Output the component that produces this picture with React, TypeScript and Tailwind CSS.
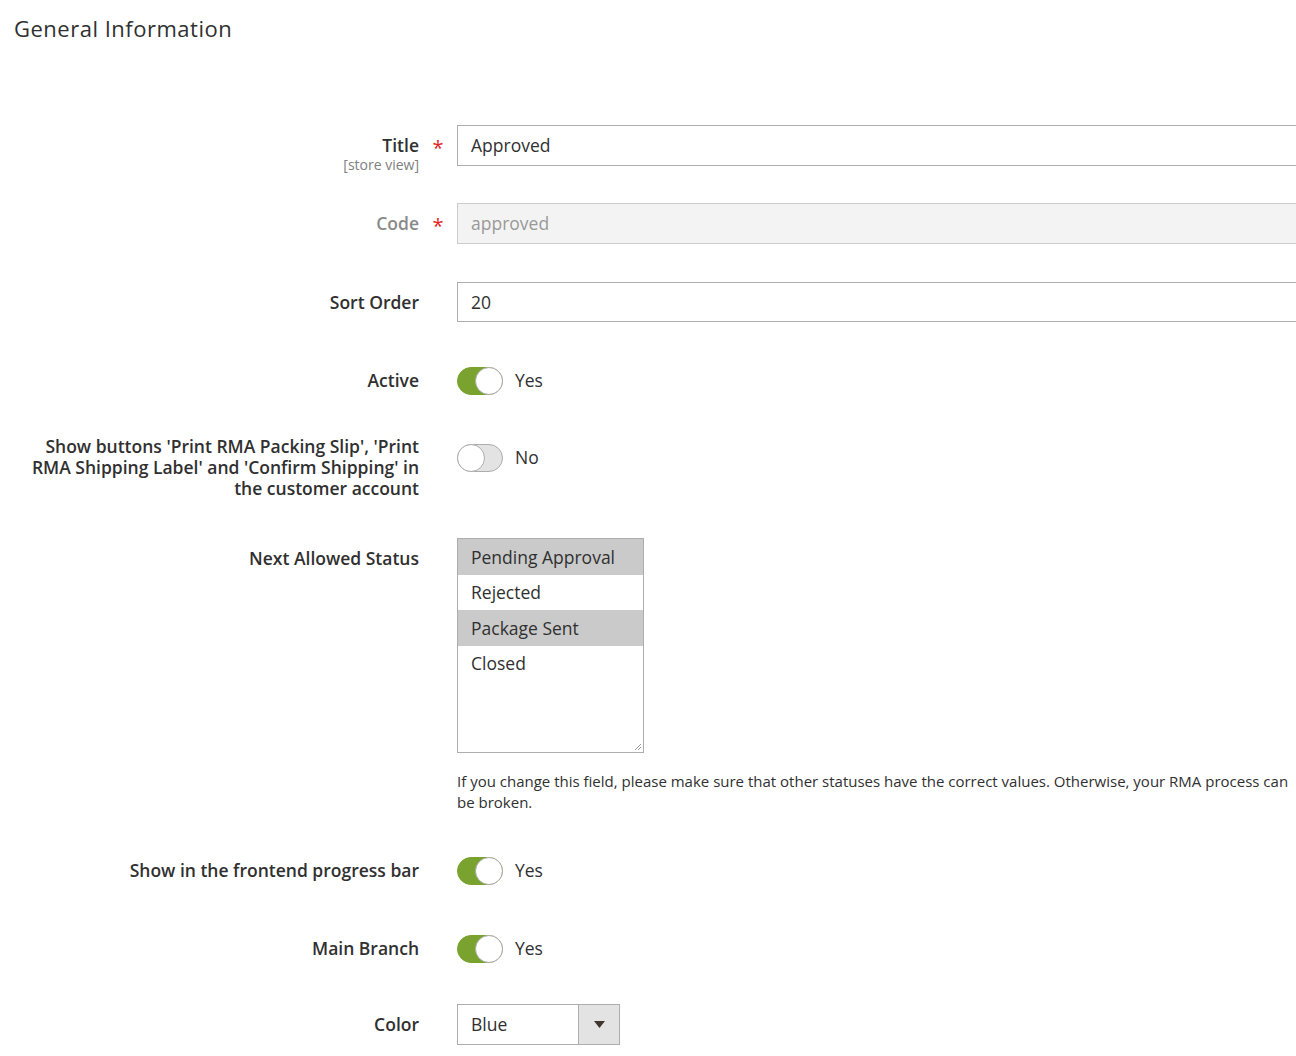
const font = { fontFamily: '"Open Sans", "Liberation Sans", Arial, sans-serif' };

function Toggle({ on, label, className = "" }: { on: boolean; label: string; className?: string }) {
  return (
    <div className={"flex h-[41px] items-center " + className}>
      <div
        className={
          on
            ? "relative h-[28px] w-[46px] rounded-full border border-[#79a22e] bg-[#79a22e]"
            : "relative h-[28px] w-[46px] rounded-full border border-[#adadad] bg-[#e3e3e3]"
        }
      >
        <div
          className={
            on
              ? "absolute right-[-1px] top-[-1px] h-[28px] w-[28px] rounded-full border border-[#adadad] bg-white"
              : "absolute left-[-1px] top-[-1px] h-[28px] w-[28px] rounded-full border border-[#adadad] bg-white"
          }
        />
      </div>
      <span className="ml-[12px] text-[17.5px] text-[#303030]">{label}</span>
    </div>
  );
}

function Row({
  label,
  note,
  required,
  disabled,
  children,
  className = "",
}: {
  label: React.ReactNode;
  note?: string;
  required?: boolean;
  disabled?: boolean;
  children: React.ReactNode;
  className?: string;
}) {
  return (
    <div className={"flex " + className}>
      <div className="w-[419px] shrink-0 pt-[10px] text-right">
        <div
          className={
            disabled
              ? "text-[17.5px] font-semibold leading-[21px] text-[#8a8a8a]"
              : "text-[17.5px] font-semibold leading-[21px] text-[#303030]"
          }
        >
          {label}
        </div>
        {note && <div className="text-[14px] leading-[17px] text-[#808080]">{note}</div>}
      </div>
      <div className="w-[38px] shrink-0 pt-[12px] text-center text-[20px] leading-[21px] text-[#e22626]">
        {required ? "*" : ""}
      </div>
      <div className="min-w-0 flex-1">{children}</div>
    </div>
  );
}

const options = [
  { name: "Pending Approval", selected: true },
  { name: "Rejected", selected: false },
  { name: "Package Sent", selected: true },
  { name: "Closed", selected: false },
];

export default function App() {
  return (
    <div className="h-[1056px] w-[1296px] overflow-hidden bg-white" style={font}>
      <h1 className="pl-[14px] pt-[12px] text-[22px] font-normal leading-[32px] tracking-[0.5px] text-[#303030]">
        General Information
      </h1>

      <div className="mt-[81px]">
        <Row label="Title" note="[store view]" required className="mb-[30px]">
          <div className="flex h-[41px] w-[900px] items-center border border-[#adadad] bg-white px-[13px] text-[17.5px] text-[#303030]">
            Approved
          </div>
        </Row>

        <Row label="Code" required disabled className="mb-[38px]">
          <div className="flex h-[41px] w-[900px] items-center border border-[#cccccc] bg-[#f3f3f3] px-[13px] text-[17.5px] text-[#999999]">
            approved
          </div>
        </Row>

        <Row label="Sort Order" className="mb-[38px]">
          <div className="flex h-[40px] w-[900px] items-center border border-[#adadad] bg-white px-[13px] text-[17.5px] text-[#303030]">
            20
          </div>
        </Row>

        <Row label="Active" className="mb-[25px]">
          <Toggle on label="Yes" />
        </Row>

        <Row
          label={
            <>
              Show buttons 'Print RMA Packing Slip', 'Print
              <br />
              RMA Shipping Label' and 'Confirm Shipping' in
              <br />
              the customer account
            </>
          }
          className="mb-[39px]"
        >
          <Toggle on={false} label="No" className="mt-[11px]" />
        </Row>

        <Row label="Next Allowed Status" className="mb-[37px]">
          <div className="relative h-[215px] w-[187px] border border-[#adadad] bg-white">
            {options.map((o) => (
              <div
                key={o.name}
                className={
                  o.selected
                    ? "flex h-[35.5px] items-center bg-[#cacaca] px-[13px] text-[17.5px] text-[#303030]"
                    : "flex h-[35.5px] items-center bg-white px-[13px] text-[17.5px] text-[#303030]"
                }
              >
                {o.name}
              </div>
            ))}
            <svg className="absolute bottom-[1px] right-[1px]" width="9" height="9" viewBox="0 0 9 9">
              <path d="M8 2 L2 8 M8 5 L5 8" stroke="#9a9a9a" strokeWidth="1" />
            </svg>
          </div>
          <p className="mt-[18px] whitespace-nowrap text-[15px] leading-[21px] text-[#303030]">
            If you change this field, please make sure that other statuses have the correct values. Otherwise, your RMA process can
            <br />
            be broken.
          </p>
        </Row>

        <Row label="Show in the frontend progress bar" className="mb-[37px]">
          <Toggle on label="Yes" />
        </Row>

        <Row label="Main Branch" className="mb-[35px]">
          <Toggle on label="Yes" />
        </Row>

        <Row label="Color">
          <div className="flex h-[41px] w-[163px] border border-[#adadad] bg-white">
            <div className="flex flex-1 items-center px-[13px] text-[17.5px] text-[#303030]">Blue</div>
            <div className="flex w-[41px] items-center justify-center border-l border-[#adadad] bg-[#e3e3e3]">
              <svg width="11" height="7" viewBox="0 0 11 7">
                <path d="M0 0 H11 L5.5 7 Z" fill="#41362f" />
              </svg>
            </div>
          </div>
        </Row>
      </div>
    </div>
  );
}
